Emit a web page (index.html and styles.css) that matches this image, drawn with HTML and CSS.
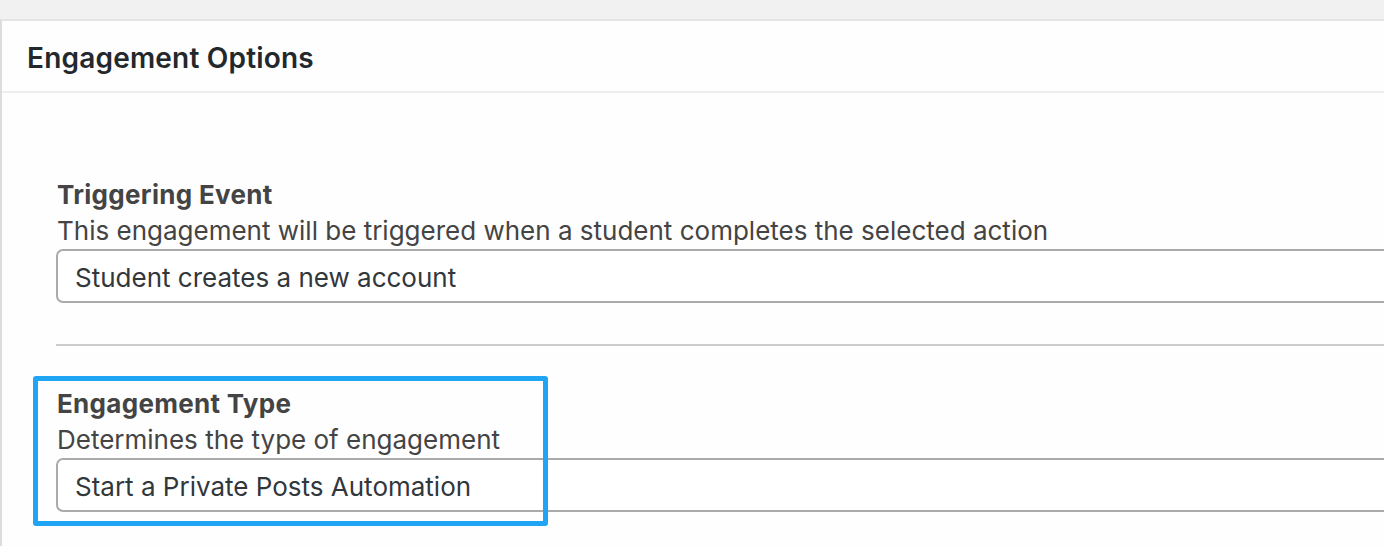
FILE: index.html
```html
<!DOCTYPE html>
<html>
<head>
<meta charset="utf-8">
<link rel="stylesheet" href="styles.css">
</head>
<body>
<div class="page">
  <div class="panel">
    <div class="panel-header">Engagement Options</div>
    <div class="panel-body">
      <div class="field">
        <div class="field-label">Triggering Event</div>
        <div class="field-desc">This engagement will be triggered when a student completes the selected action</div>
        <div class="select">Student creates a new account</div>
      </div>
      <hr class="sep">
      <div class="field field-highlight">
        <div class="field-label">Engagement Type</div>
        <div class="field-desc">Determines the type of engagement</div>
        <div class="select">Start a Private Posts Automation</div>
        <div class="highlight-box"></div>
      </div>
    </div>
  </div>
</div>
</body>
</html>
```
FILE: styles.css
```css
html, body {
  margin: 0;
  padding: 0;
  background: #f1f1f1;
  overflow: hidden;
  width: 1384px;
  height: 546px;
}
.page {
  padding-top: 19px;
  font-family: Inter, "Liberation Sans", sans-serif;
  height: 527px;
  overflow: hidden;
}
.panel {
  background: #fefefe;
  border-top: 2px solid #e5e5e5;
  border-left: 2px solid #dcdcdc;
  height: 525px;
  overflow: hidden;
}
.panel-header {
  height: 70px;
  line-height: 74px;
  padding-left: 25px;
  font-size: 28px;
  font-weight: 600;
  letter-spacing: 0.2px;
  color: #23282d;
  border-bottom: 2px solid #eeeeee;
}
.panel-body {
  padding: 84px 0 0 54px;
}
.field {
  position: relative;
  width: 1500px;
}
.field-label {
  font-size: 26px;
  font-weight: 700;
  line-height: 36px;
  letter-spacing: 0.3px;
  color: #444444;
  padding-left: 1px;
}
.field-desc {
  font-size: 26px;
  line-height: 36px;
  color: #444444;
  padding-left: 1px;
}
.select {
  box-sizing: border-box;
  height: 54px;
  border: 2px solid #aaaaaa;
  border-radius: 7px;
  padding-left: 17px;
  padding-top: 3px;
  line-height: 47px;
  font-size: 26px;
  color: #32373c;
  background: #ffffff;
}
.sep {
  border: 0;
  border-top: 2px solid #cccccc;
  margin: 41px 0 40px 0;
  width: 1500px;
}
.highlight-box {
  position: absolute;
  left: -23px;
  top: -10px;
  width: 505px;
  height: 140px;
  border: 5px solid #20a4f4;
  border-radius: 3px;
  pointer-events: none;
}
```
